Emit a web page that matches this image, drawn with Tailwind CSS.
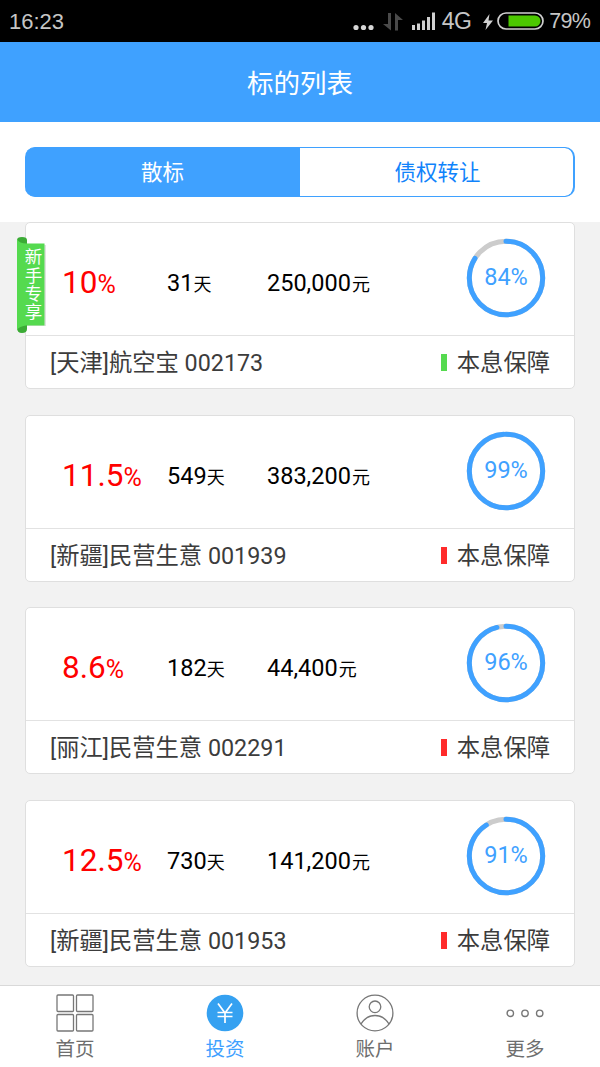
<!DOCTYPE html>
<html lang="zh-CN">
<head>
  <meta charset="UTF-8" />
  <meta name="viewport" content="width=device-width, initial-scale=1.0"/>
  <title>标的列表</title>
  <script src="https://cdn.jsdelivr.net/npm/@tailwindcss/browser@4"></script>
</head>
<body class="bg-[#f2f2f2] font-[Roboto,'Noto_Sans_CJK_SC',sans-serif]">
  <div class="h-[1067px] flex flex-col overflow-hidden">

    <!-- Status bar -->
    <div class="h-[42px] shrink-0 bg-black text-[#c6c6c6] flex items-center justify-between pl-[9px] pr-[10px] pt-px font-['Liberation_Sans',sans-serif] text-[22px]">
      <span>16:23</span>
      <div class="flex items-center">
        <svg class="w-[22px] h-[24px] mr-[8px]" viewBox="0 0 22 24" fill="#d6d6d6">
          <circle cx="3" cy="17.5" r="2.6"/><circle cx="10.5" cy="17.5" r="2.6"/><circle cx="18" cy="17.5" r="2.6"/>
        </svg>
        <svg class="w-[20px] h-[24px] mr-[9px]" viewBox="0 0 20 24" fill="#4a4a4a">
          <path d="M5 3h3v17.5L0 14h5zM12 20.500V3l8 7h-5v10.500z"/>
        </svg>
        <svg class="w-[24px] h-[24px] mr-[6px]" viewBox="0 0 24 24" fill="#d0d0d0">
          <path d="M0 15h3v5H0zM5 13.500h3V20H5zM10 10.500h3V20h-3zM15 7h3v13h-3zM20 2.500h3V20h-3z"/>
        </svg>
        <span class="text-[23px] tracking-[-0.5px] mr-[12px]">4G</span>
        <svg class="w-[10px] h-[24px] mr-[4px]" viewBox="0 0 10 24" fill="#d0d0d0">
          <path d="M6.500 4L0 13h4L2.500 20 10 10.500H5.500z"/>
        </svg>
        <svg class="w-[47px] h-[24px] mr-[5px]" viewBox="0 0 47 24">
          <rect x="1" y="3" width="45" height="16" rx="8" fill="none" stroke="#d0d0d0" stroke-width="1.700"/>
          <path d="M11.500 5.500H38a5.500 5.500 0 0 1 0 11H11.500z" fill="#4cc800"/>
        </svg>
        <span class="text-[21.500px] tracking-[-0.8px]">79%</span>
      </div>
    </div>

    <!-- Title -->
    <div class="h-[80px] shrink-0 bg-[#3fa1ff] text-white text-[26.5px] flex items-center justify-center pt-[3px]">标的列表</div>

    <!-- Tabs -->
    <div class="h-[100px] shrink-0 bg-white px-[25px] pt-[25px]">
      <div class="h-[50px] flex rounded-[10px] border-y-[1.5px] border-r-2 border-[#3fa1ff] bg-[#3fa1ff] overflow-hidden text-[21.5px]">
        <div class="w-[275px] text-white flex items-center justify-center pt-[3px]">散标</div>
        <div class="flex-1 bg-white rounded-r-[8px] text-[#1083fb] flex items-center justify-center pt-[3px] pl-[2px]">债权转让</div>
      </div>
    </div>

    <!-- List -->
    <div id="list" class="flex-1 min-h-0 px-[25px]"></div>

    <!-- Bottom nav -->
    <div class="h-[82px] shrink-0 bg-white border-t border-[#d9d9d9] grid grid-cols-4 text-[19.5px] text-[#6e6e6e]">
      <div class="flex flex-col items-center pt-[8px]">
        <svg class="w-[38px] h-[38px]" viewBox="0 0 38 38" fill="none" stroke="#777" stroke-width="1.300">
          <rect x="1" y="1" width="16.500" height="16.500" rx="1"/><rect x="20.500" y="1" width="16.500" height="16.500" rx="1"/>
          <rect x="1" y="20.500" width="16.500" height="16.500" rx="1"/><rect x="20.500" y="20.500" width="16.500" height="16.500" rx="1"/>
        </svg>
        <span class="mt-[3px] leading-[30px]">首页</span>
      </div>
      <div class="flex flex-col items-center pt-[8px] text-[#3fa1ff]">
        <svg class="w-[38px] h-[38px]" viewBox="0 0 38 38" fill="none" stroke="#fff" stroke-width="1.700">
          <circle cx="19" cy="19" r="18.300" fill="#35a1f1" stroke="none"/>
          <path d="M12 9.500l7 9.500 7-9.500M19 19v10M11.500 18.500h15M11.500 22.500h15"/>
        </svg>
        <span class="mt-[3px] leading-[30px]">投资</span>
      </div>
      <div class="flex flex-col items-center pt-[8px]">
        <svg class="w-[38px] h-[38px]" viewBox="0 0 38 38" fill="none" stroke="#777" stroke-width="1.300">
          <circle cx="19" cy="19" r="17.900"/><circle cx="19" cy="12.800" r="5.800"/>
          <path d="M5 30C8 25 13 21.500 19 21.500S30 25 33 30"/>
        </svg>
        <span class="mt-[3px] leading-[30px]">账户</span>
      </div>
      <div class="flex flex-col items-center pt-[8px]">
        <svg class="w-[38px] h-[38px]" viewBox="0 0 38 38" fill="none" stroke="#777" stroke-width="1.400">
          <circle cx="4.300" cy="19.300" r="3.200"/><circle cx="19" cy="19.300" r="3.200"/><circle cx="33.700" cy="19.300" r="3.200"/>
        </svg>
        <span class="mt-[3px] leading-[30px]">更多</span>
      </div>
    </div>
  </div>

  <script>
    const items = [
      { rate: '10', days: 31, amount: '250,000', percent: 84, name: '[天津]航空宝 002173', isNew: true },
      { rate: '11.5', days: 549, amount: '383,200', percent: 99, name: '[新疆]民营生意 001939' },
      { rate: '8.6', days: 182, amount: '44,400', percent: 96, name: '[丽江]民营生意 002291' },
      { rate: '12.5', days: 730, amount: '141,200', percent: 91, name: '[新疆]民营生意 001953' }
    ];

    // Ribbon for beginner-only items
    const ribbon = `
      <div class="absolute left-[-9px] top-[13px] w-[30px] h-[98px]">
        <svg class="absolute inset-0 w-[30px] h-[98px]" viewBox="0 0 30 98">
          <path d="M0 4Q0 1 5 1t5 3v4H0zM0 92q0 5 5 5t5-4v-6H0z" fill="#3bab35"/>
          <path d="M3 90h26V9H3z" fill="#000" opacity=".12"/>
          <path d="M0 3Q2 7.500 10 7.500H27.500V89.500H10Q2 90 0 94z" fill="#55da4f"/>
        </svg>
        <div class="absolute left-[5px] top-[12px] w-[19px] [writing-mode:vertical-rl] whitespace-nowrap text-[17.500px] tracking-[0.800px] leading-[19px] text-white">新手专享</div>
      </div>`;

    document.getElementById('list').innerHTML = items.map(item => `
      <div class="relative h-[167px] mb-[25.5px] bg-white border-[1.5px] border-[#dfdfdf] rounded-[5px]">
        ${item.isNew ? ribbon : ''}
        <div class="h-[113px] border-b border-[#e2e2e2] flex items-start pl-[36px] pt-[41px] text-black">
          <div class="w-[105px] text-[#f00] text-[31.5px] leading-[38px] whitespace-nowrap">${item.rate}<span class="text-[25px]">%</span></div>
          <div class="w-[100px] text-[23.500px] leading-[38px] whitespace-nowrap">${item.days}<span class="text-[18px]">天</span></div>
          <div class="w-[199px] text-[23.500px] leading-[38px] whitespace-nowrap">${item.amount}<span class="text-[18px] ml-px">元</span></div>
          <div class="relative -mt-[26px] w-[80px] h-[80px] flex items-center justify-center text-[23.500px] text-[#3fa1ff]">
            <svg class="absolute inset-0 w-[80px] h-[80px] -rotate-90" viewBox="0 0 80 80" fill="none" stroke-width="5">
              <circle cx="40" cy="40" r="36.700" stroke="#ccc"/>
              <circle cx="40" cy="40" r="36.700" stroke="#3fa1ff" stroke-linecap="round" pathLength="100" stroke-dasharray="${item.percent} 100"/>
            </svg>
            <span>${item.percent}%</span>
          </div>
        </div>
        <div class="h-[51px] flex items-center justify-between pl-[24px] pr-[24px] pt-[4px] text-[23.300px] text-[#3c3c3c]">
          <span>${item.name}</span>
          <span class="flex items-center"><i class="w-[6px] h-[17px] mr-[10px] -mt-[2px] ${item.isNew ? 'bg-[#55da4f]' : 'bg-[#ff2b2b]'}"></i>本息保障</span>
        </div>
      </div>`).join('');
  </script>
</body>
</html>
